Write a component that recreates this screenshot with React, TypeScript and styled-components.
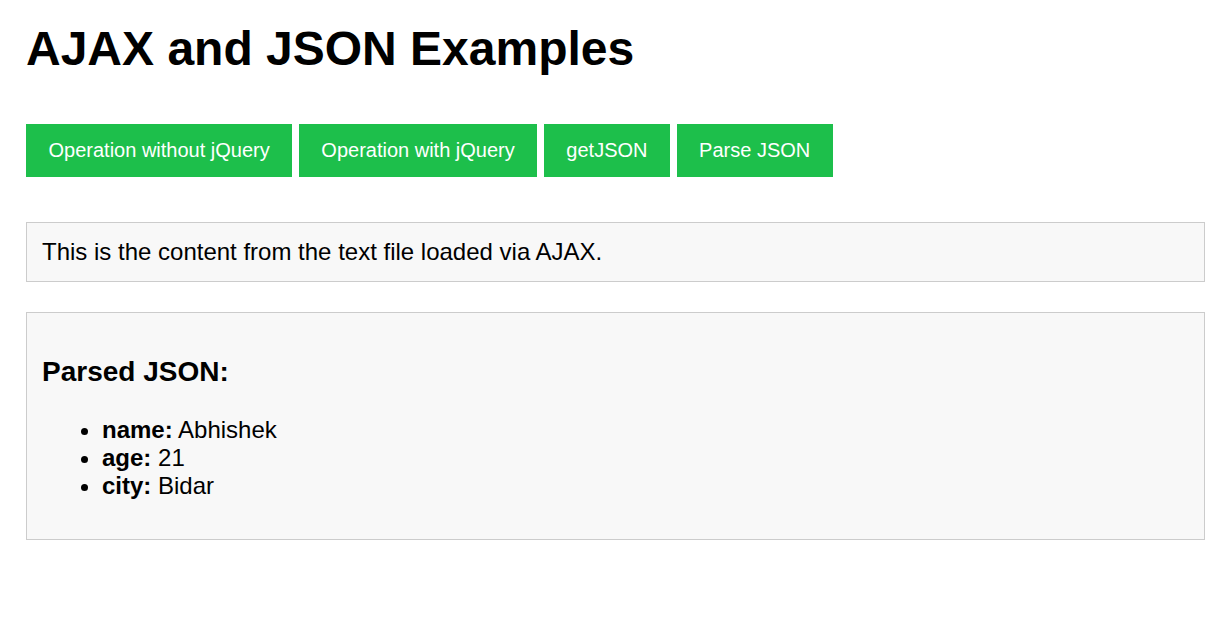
import React from "react";
import styled, { createGlobalStyle } from "styled-components";

const GlobalStyle = createGlobalStyle`
  body {
    margin: 0;
    background: #fff;
    font-family: "Liberation Sans", Arial, sans-serif;
    color: #000;
  }
`;

const Page = styled.main`
  padding: 21px 24px 40px 26px;
  font-size: 24px;
`;

const Title = styled.h1`
  margin: 0 0 48px;
  font-size: 48px;
  font-weight: bold;
`;

const Toolbar = styled.div`
  display: flex;
  gap: 6.6px;
  margin-bottom: 45px;
`;

const ActionButton = styled.button`
  font-family: "Liberation Sans", Arial, sans-serif;
  font-size: 20px;
  line-height: normal;
  padding: 15px 22.5px;
  border: none;
  border-radius: 0;
  background: #1dbf4b;
  color: #fff;
  cursor: pointer;
`;

const OutputBox = styled.div`
  border: 1px solid #cccccc;
  background: #f8f8f8;
  padding: 15px;
  margin-bottom: 30px;

  h3 {
    font-size: 28px;
    margin: 28px 0;
  }

  ul {
    margin: 24px 0;
    padding-left: 60px;
  }
`;

const person = { name: "Abhishek", age: 21, city: "Bidar" };

export default function App() {
  const buttons = ["Operation without jQuery", "Operation with jQuery", "getJSON", "Parse JSON"];

  return (
    <Page>
      <GlobalStyle />
      <Title>AJAX and JSON Examples</Title>
      <Toolbar>
        {buttons.map((label) => (
          <ActionButton key={label}>{label}</ActionButton>
        ))}
      </Toolbar>
      <OutputBox>This is the content from the text file loaded via AJAX.</OutputBox>
      <OutputBox>
        <h3>Parsed JSON:</h3>
        <ul>
          {Object.entries(person).map(([key, value]) => (
            <li key={key}>
              <strong>{key}:</strong> {value}
            </li>
          ))}
        </ul>
      </OutputBox>
    </Page>
  );
}
